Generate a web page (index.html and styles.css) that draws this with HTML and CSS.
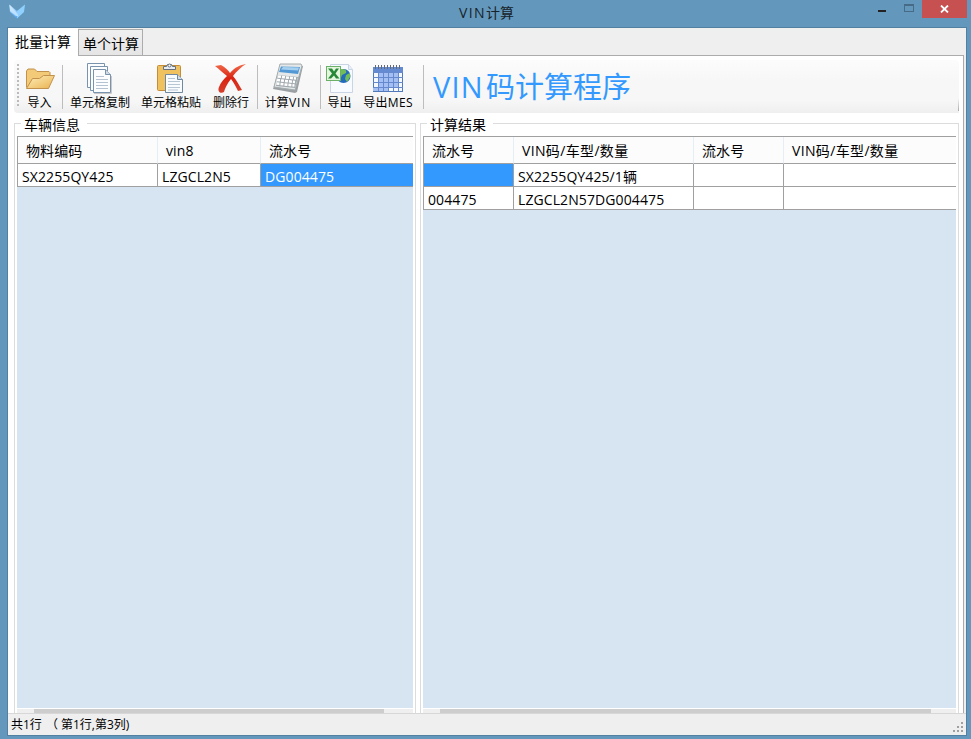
FILE: index.html
```html
<!DOCTYPE html>
<html lang="zh-CN">
<head>
<meta charset="utf-8">
<title>VIN计算</title>
<link rel="stylesheet" href="styles.css">
</head>
<body>
<div class="window">
  <header class="titlebar">
    <svg class="logo" width="16" height="15" viewBox="0 0 16 15"><defs><linearGradient id="lg" x2="0" y2="1"><stop stop-color="#bfe2ff"/><stop offset="1" stop-color="#4aa5ff"/></linearGradient></defs><path d="M0 .5L8 7v7.500L1 8z" fill="url(#lg)"/><path d="M16 .5L8 7v7.500L15 8z" fill="#8fd0ff"/><path d="M1 1l7 8 1 3-2 0-6-5z" fill="#dcefff" opacity=".7"/></svg>
    <h1><span>VIN</span>计算</h1>
    <div class="controls">
      <span class="min"></span><span class="max"></span>
      <span class="close"><svg width="9" height="8" viewBox="0 0 9 8"><path d="M1 0.5L8 7.5M8 .5L1 7.5" stroke="#fff" stroke-width="1.800"/></svg></span>
    </div>
  </header>
  <main class="client">
    <nav class="tabs"><span class="tab active">批量计算</span><span class="tab">单个计算</span></nav>
    <div class="page">
      <div class="toolbar">
        <i class="grip"></i>
        <div class="tool t-import"><svg width="32" height="32" viewBox="0 0 32 32"><defs><linearGradient id="fo" x2="1" y2="1"><stop stop-color="#fff0bd"/><stop offset="1" stop-color="#e9b14e"/></linearGradient></defs><path d="M2.500 24.500V8l1.500-2h6.500l2.500 2.500h12l1 1V14" fill="#f3ca78" stroke="#c2914c"/><path d="M2.500 25.500L8.500 15.500h7l4-3H30.500l-6 13z" fill="url(#fo)" stroke="#c2914c"/></svg><b>导入</b></div>
        <i class="sep"></i>
        <div class="tool t-copy"><svg width="32" height="32" viewBox="0 0 32 32"><g stroke="#7993ad" fill="#fbfdff"><path d="M3.500.500h17v24h-17z"/><path d="M6.500 3.500h17v24h-17z"/><path d="M9.500 6.500h12l5 5v18h-17z"/><path d="M21.500 6.500v5h5" fill="#cedae6"/></g><path d="M12 13.500h8M12 16.500h12M12 19.500h12M12 22.500h12M12 25.500h12" stroke="#b5c2cf"/><path d="M10 30.500h17.500V13" fill="none" stroke="#c8c8c8"/></svg><b>单元格复制</b></div>
        <div class="tool t-paste"><svg width="32" height="32" viewBox="0 0 32 32"><rect x="2.500" y="2.500" width="23" height="25" rx="1" fill="#efc15f" stroke="#c68d38"/><path d="M8.500 6.500v-3h3l1-2h4l1 2h3v3z" fill="#e8edf3" stroke="#66717d"/><circle cx="14.500" cy="2.500" r="1.500" fill="#fff" stroke="#63717f"/><path d="M10.500 11.500h12l5 5v13h-17z" fill="#f9fcff" stroke="#7188a1"/><path d="M22.500 11.500v5h5" fill="#d3deea" stroke="#7188a1"/><path d="M13 15.500h7M13 18.500h12M13 21.500h12M13 24.500h12M13 27h10" stroke="#b8c5d2"/></svg><b>单元格粘贴</b></div>
        <div class="tool t-delete"><svg width="32" height="32" viewBox="0 0 32 32"><defs><linearGradient id="rx" x2="0" y2="1"><stop stop-color="#f26b4b"/><stop offset=".5" stop-color="#d92311"/><stop offset="1" stop-color="#d6402d"/></linearGradient></defs><path d="M0 3l6-1c4 2 7 5 9 8C20 4 25 2 31 1c-5 3-10 8-13 12 4 5 6 9 9 14l-4 1c-2-4-4-8-7-12-4 5-6 9-7 13-3 2-7 0-5-5 2-5 5-8 8-11C7 9 4 6 0 3z" fill="url(#rx)"/></svg><b>删除行</b></div>
        <i class="sep"></i>
        <div class="tool t-calc"><svg width="32" height="32" viewBox="0 0 32 32"><path d="M8 2L31 3l-6 26-2 1L1 26l1-3z" fill="#9ba0a4"/><path d="M8 1h21l1 2-7 24-21-3z" fill="#e4e8e9" stroke="#a4acae"/><path d="M9 3.500l19 .500-2 7L7 9z" fill="#5198d5"/><path d="M11 4l16 .500-1 3-17-1z" fill="#a6d0ef"/><path d="M6 12l20 2-3 11-19-2z" fill="#a3abb0"/><path d="M6 13.500l18 2M5 17l18 2M4.500 20.500l18 2" stroke="#fff" stroke-width="2.500" stroke-dasharray="3 1"/></svg><b><span>计算</span>VIN</b></div>
        <i class="sep"></i>
        <div class="tool t-export"><svg width="32" height="32" viewBox="0 0 32 32"><path d="M6.500 1.500h18l4 5v23h-22z" fill="#f7faff" stroke="#c9d5e4"/><path d="M24.500 1.500v5h4" fill="#e5edf6" stroke="#c9d5e4"/><circle cx="19.500" cy="13" r="7" fill="#246abc"/><path d="M17 6c4 0 6 1 5 4l-4 2-2 5c-3-1-4-5-3-8zM22 12l4-2 0 4-3 5-2-3z" fill="#72bd56"/><rect x="2.500" y="3.500" width="14" height="14" fill="#e4f4dd" stroke="#6bb068"/><path d="M4 5.500h4l2 3 2-3h3l-3.500 5 4 5H12l-2-3-3 3H4l4-5z" fill="#278938"/></svg><b>导出</b></div>
        <div class="tool t-mes"><svg width="32" height="32" viewBox="0 0 32 32"><rect x="1.500" y="4.500" width="29" height="24" fill="#f4f8ff" stroke="#5279bb"/><path d="M1 4h30v5H1z" fill="#648bd2"/><path d="M6 9h20v15H6zM1 24h15v4H1z" fill="#a4bff4"/><path d="M1 9.500h30M1 14.500h30M1 19.500h30M1 24.500h30M6.500 9v19M11.500 9v19M16.500 9v19M21.500 9v19M26.500 9v19" stroke="#6688cd"/><path d="M3.500 2v4M6.500 2v4M9.500 2v4M12.500 2v4M15.500 2v4M18.500 2v4M21.500 2v4M24.500 2v4M27.500 2v4" stroke="#626a77"/></svg><b>导出MES</b></div>
        <i class="sep"></i>
        <h2><span>VIN</span>码计算程序</h2>
      </div>
      <div class="groups">
        <section class="group left"><h3>车辆信息</h3>
          <div class="grid">
            <div class="row head"><span>物料编码</span><span>vin8</span><span>流水号</span></div>
            <div class="row"><span>SX2255QY425</span><span>LZGCL2N5</span><span class="sel">DG004475</span></div>
            <div class="scroll"><i></i></div>
          </div>
        </section>
        <section class="group right"><h3>计算结果</h3>
          <div class="grid">
            <div class="row head"><span>流水号</span><span class="wide">VIN码/车型/数量</span><span>流水号</span><span class="wide">VIN码/车型/数量</span></div>
            <div class="row"><span class="sel"></span><span>SX2255QY425/1辆</span><span></span><span></span></div>
            <div class="row"><span>004475</span><span>LZGCL2N57DG004475</span><span></span><span></span></div>
            <div class="scroll"><i></i></div>
          </div>
        </section>
      </div>
    </div>
    <footer class="status"><span>共1行</span><span>（ 第1行,第3列)</span><svg class="resize" width="11" height="11" viewBox="0 0 11 11"><path d="M8 0h2v2H8zM4 4h2v2H4zM8 4h2v2H8zM0 8h2v2H0zM4 8h2v2H4zM8 8h2v2H8z" fill="#a0a0a0"/></svg></footer>
  </main>
</div>
</body>
</html>
```
FILE: styles.css
```css
* { box-sizing: border-box; }
body { margin: 0; font: 14px/20px "Open Sans", "Noto Sans CJK SC", sans-serif; color: #000; }
h1, h2, h3, b { margin: 0; font-weight: 400; }
.window { width: 971px; height: 739px; background: #6398bc; display: flex; flex-direction: column; overflow: hidden; }
.titlebar { height: 27px; flex: none; display: grid; grid-template-columns: 130px 1fr 130px; padding: 0 4px 0 9px; }
.logo { margin-top: 4px; }
.titlebar h1 { font-size: 14px; line-height: 25px; text-align: center; color: #17222a; padding-right: 3px; }
.titlebar h1 span { letter-spacing: 1.4px; }
.controls { display: flex; justify-content: flex-end; align-items: flex-start; }
.min { width: 8px; height: 2px; background: #222; margin: 10px 18px 0 0; }
.max { width: 10px; height: 8px; border: 1px solid #476b86; border-top-width: 2px; margin: 4px 8px 0 0; }
.close { width: 45px; height: 18px; background: #c75050; display: flex; align-items: center; justify-content: center; }
.client { width: 960px; height: 709px; margin-left: 7px; border: 1px solid #5280a0; background: #efefef; display: flex; flex-direction: column; }
.tabs { height: 27px; flex: none; display: flex; align-items: flex-end; }
.tab { height: 26px; width: 65px; border: 1px solid #acacac; border-bottom: 0; background: linear-gradient(#f0f0f0, #e5e5e5); line-height: 28px; padding-left: 4px; white-space: nowrap; }
.tab.active { position: relative; width: 70px; height: 28px; margin-bottom: -1px; background: #fff; border: 0; padding-left: 7px; line-height: 27px; }
.page { height: 658px; flex: none; background: #fff; width: 956px; border: solid #acacac; border-width: 1px 1px 0 0; padding: 4px 4px 0 6px; }
.toolbar { height: 53px; background: linear-gradient(transparent 75%, #aaa) right top / 1px 51px no-repeat, linear-gradient(#fcfcfc, #f7f7f7 40%, #f7f7f7 75%, #efefef); border-radius: 4px 4px 0 4px; display: flex; padding-top: 3px; }
.grip { width: 2px; height: 42px; margin: 1px 0 0 3px; background: repeating-linear-gradient(#bbb 0 2px, transparent 2px 4px); flex: none; }
.tool { display: flex; flex-direction: column; align-items: center; font-size: 12px; line-height: 16px; white-space: nowrap; flex: none; }
.tool svg { display: block; flex: none; }
.t-import { width: 41px; margin-right: 2px; }
.t-copy { width: 74px; }
.t-paste { width: 70px; margin-left: -1px; }
.t-delete { width: 50px; margin-right: 1px; }
.t-calc { width: 60px; margin-right: 2px; }
.t-calc b { letter-spacing: .9px; }
.t-calc b span { letter-spacing: 0; }
.t-export { width: 37px; }
.t-mes { width: 60px; margin-right: 5px; }
.t-mes b { letter-spacing: .3px; }
.sep { width: 1px; height: 44px; margin-top: 2px; background: #bdbdbd; flex: none; }
.toolbar h2 { font-size: 29px; line-height: 48px; color: #39f; margin-left: 9px; white-space: nowrap; }
.toolbar h2 span { display: inline-block; width: 53px; letter-spacing: 1.2px; }
.groups { display: flex; gap: 4px; padding-top: 10px; }
.group { height: 590px; border: 1px solid #dcdcdc; border-bottom: 0; padding: 0 2px; flex: none; }
.left { width: 402px; }
.right { width: 539px; }
.group h3 { font-size: 14px; line-height: 20px; width: 66px; margin: -9px 0 1px 4px; padding-left: 3px; background: #fff; white-space: nowrap; }
.grid { height: 577px; background: #d7e4f2; border-top: 1px solid #a0a0a0; display: flex; flex-direction: column; }
.row { display: grid; grid-template-rows: 100%; height: 23px; flex: none; background: #fff; }
.left .row { grid-template-columns: 141px 103px 1fr; }
.right .row { grid-template-columns: 91px 180px 90px 1fr; }
.row span { padding-left: 4px; border-right: 1px solid #a0a0a0; border-bottom: 1px solid #a0a0a0; line-height: 26px; letter-spacing: .1px; white-space: nowrap; }
.row span:first-child { border-left: 1px solid #a0a0a0; }
.row span:last-child { border-right: 0; }
.row.head { height: 27px; background: #fcfcfc; }
.row.head span { padding-left: 8px; line-height: 27px; border-right-color: #e5eef7; }
.row.head .wide { letter-spacing: .35px; }
.row .sel { background: #39f; color: #fff; }
.scroll { height: 5px; margin-top: auto; border-top: 1px solid #fff; background: #efefef; padding-left: 17px; }
.scroll i { display: block; height: 4px; width: 350px; background: #cdcdcd; }
.right .scroll i { width: 491px; }
.status { height: 22px; flex: none; border-top: 1px solid #d7d7d7; display: flex; font-size: 12px; line-height: 21px; padding-left: 3px; background: #efefef; }
.status span:nth-child(2) { margin-left: 4px; }
.resize { margin: 8px 2px 0 auto; }
```
